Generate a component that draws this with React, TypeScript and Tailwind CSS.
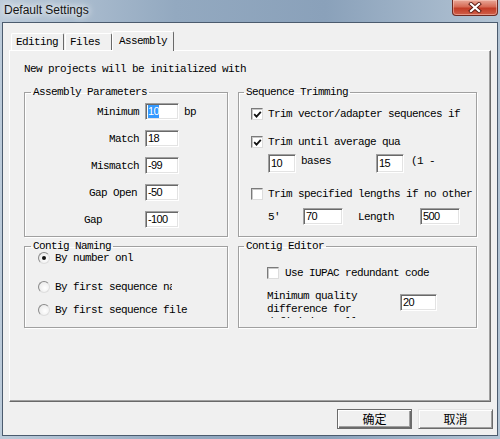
import type { ReactNode } from 'react';

const mono = "font-['Liberation_Mono',monospace] text-[11px] leading-[12px] tracking-[-0.6px] text-black";
const field = "flex items-center bg-white border border-t-[#a0a0a0] border-l-[#a0a0a0] border-r-white border-b-white shadow-[inset_1px_1px_0_#696969,inset_-1px_-1px_0_#e3e3e3] pl-[2px] font-['Liberation_Sans',sans-serif] text-[11px] leading-[13px] text-black";
const group = 'min-w-0 border border-[#a0a0a0] shadow-[1px_1px_0_#fff,inset_1px_1px_0_#fff] p-0 m-0';
const tab = "flex items-center h-[17px] border-l border-t border-white border-r border-r-[#696969] rounded-tl-[2px] rounded-tr-[2px]";

function Field({ className, children }: { className: string; children: ReactNode }) {
  return <div className={`${field} ${className}`}>{children}</div>;
}

function Check({ on }: { on?: boolean }) {
  return (
    <span className="flex h-[12px] w-[12px] shrink-0 items-center justify-center bg-white border border-t-[#7a7a7a] border-l-[#7a7a7a] border-r-[#dcdcdc] border-b-[#dcdcdc] shadow-[inset_1px_1px_0_#c8c8c8]">
      {on && (
        <svg width="9" height="9" viewBox="0 0 9 9">
          <polyline points="1.2,4.2 3.5,6.6 7.8,1.8" fill="none" stroke="#111" strokeWidth="1.8" />
        </svg>
      )}
    </span>
  );
}

function Radio({ on }: { on?: boolean }) {
  return (
    <span className="flex h-[12px] w-[12px] shrink-0 items-center justify-center rounded-full border border-t-[#8a8a8a] border-l-[#8a8a8a] border-r-[#dedede] border-b-[#dedede] bg-[radial-gradient(circle_at_60%_60%,#fff,#e4e4e4)]">
      {on && <span className="h-[4px] w-[4px] rounded-full bg-[#111]" />}
    </span>
  );
}

export default function App() {
  return (
    <div className="w-[500px] h-[439px] flex flex-col overflow-hidden bg-[linear-gradient(to_right,#bccbda,#93a9c0_35%,#8aa1ba_65%,#b3c4d4)]">
      <div className="relative h-[22px] shrink-0 flex items-center pl-[4px] pb-[3px]">
        <span className="font-['Liberation_Sans',sans-serif] text-[12px] text-[#151515] [text-shadow:0_0_6px_#fff,0_0_10px_#fff]">Default Settings</span>
        <div className="absolute right-[2px] top-0 flex h-[16px] w-[46px] items-center justify-center rounded-b-[4px] border border-t-0 border-[#6e2a22] bg-[linear-gradient(to_bottom,#e8a898,#d66a55_45%,#c23c26_55%,#d0604a)] shadow-[inset_0_0_0_1px_rgba(255,220,210,0.45)]">
          <svg width="14" height="11" viewBox="0 0 14 11">
            <path d="M3 2 L11 9 M11 2 L3 9" stroke="#5a1a12" strokeWidth="4" strokeLinecap="square" />
            <path d="M3 2 L11 9 M11 2 L3 9" stroke="#fff" strokeWidth="2.2" strokeLinecap="square" />
          </svg>
        </div>
      </div>

      <div className="flex-1 flex pl-[2px] pr-[2px] pb-[3px]">
        <div className="flex-1 flex flex-col bg-[#f0f0f0] border border-[#4b5b6e]">
          {/* tabs */}
          <div className={`flex h-[19px] items-end pl-[8px] mt-[8px] ${mono}`}>
            <div className={`${tab} w-[53px] pl-[4px]`}>Editing</div>
            <div className={`${tab} w-[47px] ml-[1px] pl-[4px]`}>Files</div>
            <div className={`${tab} relative z-10 -mb-[1px] h-[20px] w-[62px] pl-[6px] pb-[1px] bg-[#f0f0f0]`}>Assembly</div>
          </div>

          {/* tab page */}
          <div className={`ml-[6px] w-[482px] h-[352px] border-t border-l border-white border-r border-b border-r-[#696969] border-b-[#696969] shadow-[inset_-1px_-1px_0_#a0a0a0] ${mono}`}>
            <div className="mt-[12px] pl-[14px]">New projects will be initialized with</div>

            <div className="mt-[11px] ml-[14px] grid grid-cols-[204px_239px] grid-rows-[151px_88px] gap-x-[10px] gap-y-[3px]">
              <fieldset className={group}>
                <legend className="ml-[6px] px-[2px]">Assembly Parameters</legend>
                <div className="flex flex-col">
                  <div className="mt-[5px] flex h-[17px] items-center">
                    <span className="w-[114px] text-right">Minimum</span>
                    <Field className="ml-[6px] w-[34px] h-[17px]"><span className="bg-[#3399ff] text-white">10</span></Field>
                    <span className="ml-[5px]">bp</span>
                  </div>
                  <div className="mt-[10px] flex h-[17px] items-center">
                    <span className="w-[114px] text-right">Match</span>
                    <Field className="ml-[6px] w-[34px] h-[17px]">18</Field>
                  </div>
                  <div className="mt-[10px] flex h-[17px] items-center">
                    <span className="w-[114px] text-right">Mismatch</span>
                    <Field className="ml-[6px] w-[34px] h-[17px]">-99</Field>
                  </div>
                  <div className="mt-[10px] flex h-[17px] items-center">
                    <span className="w-[114px] pr-[2px] text-right">Gap Open</span>
                    <Field className="ml-[6px] w-[34px] h-[17px]">-50</Field>
                  </div>
                  <div className="mt-[10px] flex h-[17px] items-center">
                    <span className="w-[114px] pl-[59px]">Gap</span>
                    <Field className="ml-[6px] w-[34px] h-[17px]">-100</Field>
                  </div>
                </div>
              </fieldset>

              <fieldset className={group}>
                <legend className="ml-[5px] px-[2px]">Sequence Trimming</legend>
                <div className="flex flex-col">
                  <div className="mt-[10px] flex h-[12px] items-center pl-[12px]">
                    <Check on />
                    <span className="ml-[5px] whitespace-nowrap">Trim vector/adapter sequences if</span>
                  </div>
                  <div className="mt-[16px] flex h-[12px] items-center pl-[12px]">
                    <Check on />
                    <span className="ml-[5px] whitespace-nowrap">Trim until average qua</span>
                  </div>
                  <div className="mt-[6px] flex h-[19px] items-start pl-[29px]">
                    <Field className="w-[28px] h-[19px]">10</Field>
                    <span className="ml-[5px] mt-[1px] w-[75px]">bases</span>
                    <Field className="w-[28px] h-[19px]">15</Field>
                    <span className="ml-[7px] mt-[1px]">(1 -</span>
                  </div>
                  <div className="mt-[15px] flex h-[12px] items-center pl-[12px]">
                    <Check />
                    <span className="ml-[5px] whitespace-nowrap">Trim specified lengths if no other</span>
                  </div>
                  <div className="mt-[8px] flex h-[17px] items-center pl-[29px]">
                    <span className="w-[35px]">5'</span>
                    <Field className="w-[40px] h-[17px]">70</Field>
                    <span className="ml-[15px] w-[62px]">Length</span>
                    <Field className="w-[40px] h-[17px]">500</Field>
                  </div>
                </div>
              </fieldset>

              <fieldset className={group}>
                <legend className="ml-[6px] px-[2px]">Contig Naming</legend>
                <div className="flex flex-col">
                  <div className="flex h-[12px] items-center pl-[13px]">
                    <Radio on />
                    <span className="ml-[5px] whitespace-nowrap">By number onl</span>
                  </div>
                  <div className="mt-[17px] flex h-[12px] items-center pl-[13px]">
                    <Radio />
                    <span className="ml-[5px] w-[117px] overflow-hidden whitespace-nowrap">By first sequence name</span>
                  </div>
                  <div className="mt-[11px] flex h-[12px] items-center pl-[13px]">
                    <Radio />
                    <span className="ml-[5px] whitespace-nowrap">By first sequence file</span>
                  </div>
                </div>
              </fieldset>

              <fieldset className={group}>
                <legend className="ml-[5px] px-[2px]">Contig Editor</legend>
                <div className="flex flex-col">
                  <div className="mt-[15px] flex h-[12px] items-center pl-[28px]">
                    <Check />
                    <span className="ml-[6px] whitespace-nowrap">Use IUPAC redundant code</span>
                  </div>
                  <div className="mt-[11px] flex items-start pl-[28px]">
                    <div className="w-[133px] h-[28px] overflow-hidden leading-[13px] whitespace-nowrap">
                      Minimum quality<br />difference for<br />definitive call
                    </div>
                    <Field className="mt-[4px] w-[37px] h-[17px]">20</Field>
                  </div>
                </div>
              </fieldset>
            </div>
          </div>

          {/* buttons */}
          <div className="mt-[7px] flex justify-end gap-[6px] pr-[4px] font-['Noto_Sans_CJK_SC',sans-serif] text-[12px] text-black">
            <button className="flex h-[20px] w-[75px] items-center justify-center border border-[#6b6b6b] bg-[#f0f0f0] shadow-[inset_1px_1px_0_#fff,inset_-1px_-1px_0_#6b6b6b,inset_-2px_-2px_0_#a0a0a0]">确定</button>
            <button className="flex h-[20px] w-[75px] items-center justify-center border border-t-[#e3e3e3] border-l-[#e3e3e3] border-r-[#6b6b6b] border-b-[#6b6b6b] bg-[#f0f0f0] shadow-[inset_1px_1px_0_#fff,inset_-1px_-1px_0_#a0a0a0]">取消</button>
          </div>
        </div>
      </div>
    </div>
  );
}
